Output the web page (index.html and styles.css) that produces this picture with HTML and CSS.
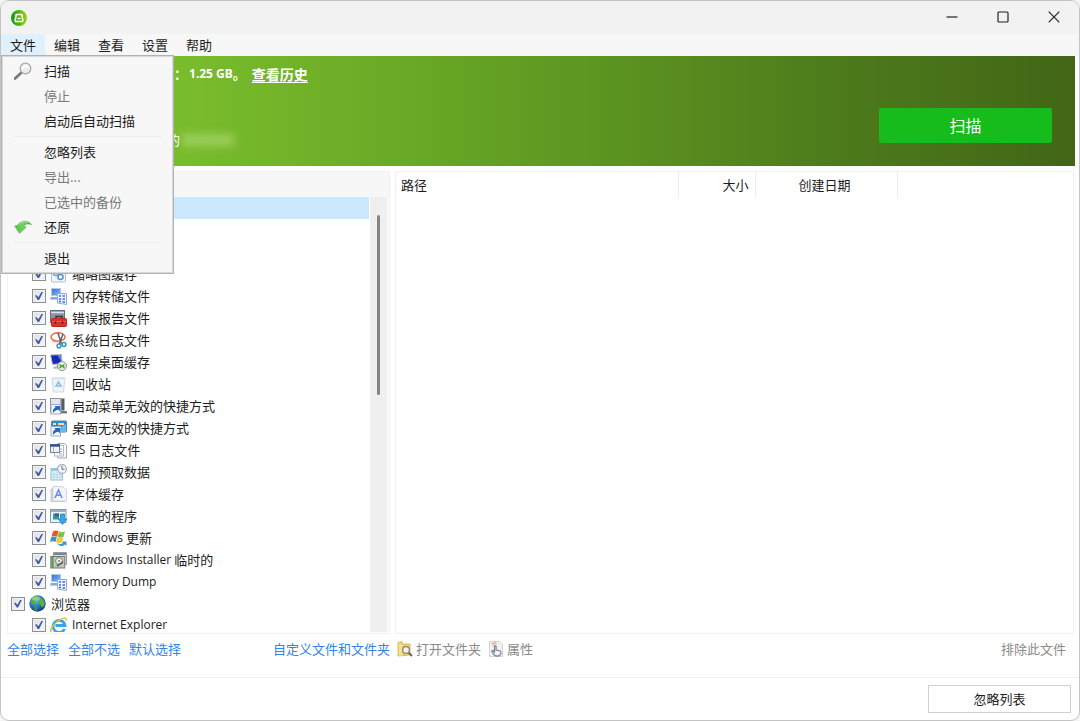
FILE: index.html
```html
<!DOCTYPE html>
<html lang="zh-CN">
<head>
<meta charset="utf-8">
<title>扫描</title>
<link rel="stylesheet" href="styles.css">
</head>
<body>
<svg class="defs" aria-hidden="true">
  <defs>
    <linearGradient id="g-leaf" x1="0" x2="1"><stop offset="0" stop-color="#0a9a18"/><stop offset="1" stop-color="#9ed400"/></linearGradient>
    <linearGradient id="g-arrow" x1="0" y1="0" x2="1" y2="0"><stop offset="0" stop-color="#4cbf43"/><stop offset=".5" stop-color="#6fd25c"/><stop offset="1" stop-color="#2c8f2c"/></linearGradient>
    <radialGradient id="g-globe" cx=".4" cy=".3" r=".8"><stop offset="0" stop-color="#6db8f5"/><stop offset=".6" stop-color="#1f62c4"/><stop offset="1" stop-color="#0b2d7c"/></radialGradient>
    <linearGradient id="g-blue" x1="0" y1="0" x2="1" y2="1"><stop offset="0" stop-color="#2f6fdc"/><stop offset="1" stop-color="#8ab8f6"/></linearGradient>
    <symbol id="i-dump" viewBox="0 0 17 17">
      <rect x="1.500" y=".5" width="9" height="7" fill="url(#g-blue)" stroke="#b4c8e6"/>
      <path d="M0 9h10v3H0z" fill="#b9cdea"/><path d="M1 10h6" stroke="#5a84c8"/>
      <path d="M7.500 5.500h9v11l-9-1.500z" fill="#eef4ff" stroke="#8ea9d8"/>
      <path d="M9 8h2M9 11h2M9 13.500h2M12.500 8h2.500M12.500 11h2.500M12.500 14h2.500" stroke="#3c68dc" stroke-width="1.300"/>
    </symbol>
  </defs>
</svg>

<div class="window">
  <header class="titlebar">
    <svg class="logo" viewBox="0 0 16 16" aria-hidden="true"><circle cx="8" cy="8" r="8" fill="url(#g-leaf)"/><path d="M4 11.500L5.200 4.500h5.600l1.200 7" fill="none" stroke="#fff" stroke-width="1.600"/><path d="M4 11.500h8M6.500 8.500h3" stroke="#fff" stroke-width="1.500"/></svg>
    <div class="controls">
      <button type="button" aria-label="最小化"><svg viewBox="0 0 12 12"><path d="M.5 6h11"/></svg></button>
      <button type="button" aria-label="最大化"><svg viewBox="0 0 12 12"><rect x="1" y="1" width="10" height="10" rx="1"/></svg></button>
      <button type="button" aria-label="关闭"><svg viewBox="0 0 12 12"><path d="M.7.7l10.600 10.600M11.300.7L.7 11.300"/></svg></button>
    </div>
  </header>

  <nav class="menubar">
    <button type="button" class="open">文件</button>
    <button type="button">编辑</button>
    <button type="button">查看</button>
    <button type="button">设置</button>
    <button type="button">帮助</button>
    <div class="dropdown">
      <button type="button"><svg viewBox="0 0 18 18" aria-hidden="true"><path d="M1 16.500l6-5.500" stroke="#777" stroke-width="2.600" stroke-linecap="round"/><circle cx="11.500" cy="6.500" r="5.300" fill="#eee" stroke="#a9a9a9" stroke-width="1.300"/><path d="M8 6.500c1-3 5-3.500 6.500-1" fill="none" stroke="#fff" stroke-width="2"/></svg>扫描</button>
      <button type="button" disabled>停止</button>
      <button type="button">启动后自动扫描</button>
      <hr>
      <button type="button">忽略列表</button>
      <button type="button" disabled>导出...</button>
      <button type="button" disabled>已选中的备份</button>
      <button type="button"><svg viewBox="0 0 18 18" aria-hidden="true"><path d="M.5 8L3.500 7.200C5.500 3.500 13.500.5 17.500 7c-3-1.800-6-1.300-7.500 1.300l2.300.9L5.500 15.500z" fill="url(#g-arrow)" stroke="#63b95a" stroke-width=".5"/><path d="M5 7.500c2-3 6-4 9-2.500" fill="none" stroke="#a5e595"/></svg>还原</button>
      <hr>
      <button type="button">退出</button>
    </div>
  </nav>

  <section class="hero">
    <div class="summary">
      <p class="freed"><span>：</span><span class="amount">1.25 GB</span><span>。</span><a href="#history">查看历史</a></p>
      <p class="notice">的<span class="smudge"></span></p>
    </div>
    <button type="button" class="scan">扫描</button>
  </section>

  <main class="panels">
    <section class="tree-panel">
      <div class="tree-head"></div>
      <div class="tree-body">
        <ul class="tree">
          <li class="group selected"></li>
          <li></li>
          <li></li>
          <li><label><input type="checkbox" checked><svg viewBox="0 0 17 17"><rect x="1.500" y=".5" width="14" height="15.500" rx="1" fill="#f1f4f8" stroke="#b9c0c9"/><circle cx="6" cy="7" r="2.500" fill="#fff" stroke="#6ea6d6" stroke-width="1.600"/><circle cx="10.500" cy="11" r="2.500" fill="#fff" stroke="#5794cc" stroke-width="1.600"/></svg>缩略图缓存</label></li>
          <li><label><input type="checkbox" checked><svg><use href="#i-dump"/></svg>内存转储文件</label></li>
          <li><label><input type="checkbox" checked><svg viewBox="0 0 17 17"><rect x=".5" y=".5" width="14" height="12" fill="#8b949e" stroke="#65707c"/><path d="M1 2.500h13" stroke="#dce2e8" stroke-width="1.500"/><path d="M6 9V6.500h6V9" fill="none" stroke="#343434" stroke-width="1.500"/><rect x="1.500" y="8.500" width="15" height="8" rx="1" fill="#d8322c" stroke="#b92a25"/><path d="M2 11.500h14" stroke="#f37a6b" stroke-width=".6"/><path d="M5.500 11.500v2M12.500 11.500v2" stroke="#4a1613" stroke-width="1.500"/></svg>错误报告文件</label></li>
          <li><label><input type="checkbox" checked><svg viewBox="0 0 17 17"><ellipse cx="8" cy="5" rx="7" ry="4.200" fill="none" stroke="#e56845" stroke-width="1.500"/><path d="M2 9c3 1.500 6 1.500 9-.5" fill="none" stroke="#f0977a"/><path d="M8 1l3.500 11M13 2l-4 11" stroke="#59636d" stroke-width="1.500"/><circle cx="9" cy="14" r="1.900" fill="#fff" stroke="#3299c4" stroke-width="1.500"/><circle cx="14" cy="12.500" r="1.900" fill="#fff" stroke="#3299c4" stroke-width="1.500"/></svg>系统日志文件</label></li>
          <li><label><input type="checkbox" checked><svg viewBox="0 0 17 17"><path d="M.5 1l11-.5.5 9-9.500 1z" fill="#1629b8" stroke="#b8bfcc"/><path d="M7 1l4-.2v6z" fill="#5c7dec"/><path d="M3 13l5-1.500v3L4 15z" fill="#b5bcc6"/><circle cx="12" cy="12" r="4.500" fill="#e8eee6" stroke="#8d958a"/><path d="M9.500 10.500l2 1.500-2 2M14.500 10.500l-2 1.500 2 2" fill="none" stroke="#34a32e" stroke-width="1.400"/></svg>远程桌面缓存</label></li>
          <li><label><input type="checkbox" checked><svg viewBox="0 0 17 17"><path d="M2 2l13-.5-1.500 14.500h-10z" fill="#eef4fa" stroke="#ced9e4"/><path d="M2 2.500h13" stroke="#dce6ef" stroke-width="2"/><path d="M8.500 6l2.500 4H6z" fill="none" stroke="#8fbcec" stroke-width="1.500"/></svg>回收站</label></li>
          <li><label><input type="checkbox" checked><svg viewBox="0 0 17 17"><rect x=".5" y=".5" width="10" height="14" fill="#dfe6ee" stroke="#8c939b"/><path d="M10 .5h4.500v12H10z" fill="#555b61"/><path d="M10 .5h1.500v12H10z" fill="#aab0b6"/><path d="M11 13h6v2.500h-6z" fill="#737980"/><rect x="1" y="6.500" width="9.500" height="9.500" fill="#f5f9ff" stroke="#97acc8"/><path d="M3 15c-.5-3 .5-5 2.500-5.500L4.500 8H10v5.500l-1.500-1.700C6 12 4.500 13 3 15z" fill="#2469b8"/></svg>启动菜单无效的快捷方式</label></li>
          <li><label><input type="checkbox" checked><svg viewBox="0 0 17 17"><rect x="1.500" y="1" width="15" height="11" rx="1" fill="#2b8ad4" stroke="#5a84a8"/><path d="M3 3h3v2H3zM8 3h6v2H8z" fill="#f3e493"/><path d="M9 8l7-4v8H9z" fill="#68b8ed"/><rect x="1" y="6.500" width="9.500" height="9.500" fill="#f5f9ff" stroke="#97acc8"/><path d="M3 15c-.5-3 .5-5 2.500-5.500L4.500 8H10v5.500l-1.500-1.700C6 12 4.500 13 3 15z" fill="#2469b8"/></svg>桌面无效的快捷方式</label></li>
          <li><label><input type="checkbox" checked><svg viewBox="0 0 17 17"><path d="M7.500 1.500h7l2 2v12.500h-9z" fill="#f6f7fa" stroke="#a4aab3"/><rect x="4.500" y="3.500" width="9" height="10.500" fill="#fbfbfd" stroke="#b5bbc6"/><path d="M9 7h3M9 9.500h3M9 12h3" stroke="#a89bc5"/><rect x=".5" y="2.500" width="9" height="8" fill="#eff3f8" stroke="#7186ab"/><path d="M0 3.500h10" stroke="#344f8d" stroke-width="2.400"/><path d="M3.500 5v5" stroke="#a2b4cf"/></svg><span class="latin">IIS</span>&nbsp;日志文件</label></li>
          <li><label><input type="checkbox" checked><svg viewBox="0 0 17 17"><rect x="1" y="4.500" width="11.500" height="11.500" fill="#dff1f8" stroke="#91c0d2"/><path d="M1 6h11" stroke="#91cfe4" stroke-width="2"/><path d="M4 8v7M7 8v7M10 8v7M2 10.500h10M2 13h10" stroke="#b1d9e7" stroke-width=".8"/><circle cx="12" cy="5" r="4.400" fill="#f2f5f7" stroke="#a4b1b9" stroke-width="1.200"/><path d="M12 2v3.300h2.500" fill="none" stroke="#56757f"/></svg>旧的预取数据</label></li>
          <li><label><input type="checkbox" checked><svg viewBox="0 0 17 17"><path d="M3 .5h9l4.500 3V15H3z" fill="#f4f5f8" stroke="#d3d6dd"/><path d="M.5 3.500L3 1v13l-2.500 2z" fill="#c9ced7"/><path d="M1 15.500h14" stroke="#c4cad4"/><path d="M5 12l3.500-8 3.500 8M6.500 9.300h4" fill="none" stroke="#6a90dc" stroke-width="1.600"/></svg>字体缓存</label></li>
          <li><label><input type="checkbox" checked><svg viewBox="0 0 17 17"><rect x=".5" y="1.500" width="15.500" height="13" fill="#eef3f7" stroke="#8297a9"/><path d="M1 3h15" stroke="#9eb0bf" stroke-width="2"/><path d="M3 5.500h6v6H3z" fill="#349b91"/><path d="M5 5.500h4v3H5z" fill="#2567a8"/><path d="M10.500 6h4v5h2.300l-4.300 5.500L8.200 11h2.300z" fill="#35a7e8" stroke="#197abd" stroke-width=".7"/></svg>下载的程序</label></li>
          <li><label><input type="checkbox" checked><svg viewBox="0 0 17 17"><path d="M3 1.500c2-1.500 3.500-1.300 5.500-.3L7 6.800c-2-1-3.700-1-5.500 0z" fill="#e9572c"/><path d="M9 1.500c2 1 4 1 6 0L13.500 7c-2 1-4 .8-6 0z" fill="#7cc242"/><path d="M1.300 7.300c2-1 3.700-1 5.500 0L5.500 12C3.500 11 2 11 0 12z" fill="#3c8fdd"/><path d="M7.200 7.500c2 1 4 1 6 0l-1.200 4.800c-2 1-4 .8-6 0z" fill="#f9c531"/><path d="M7 12.500c2 2 4 2 6 .5l-1-1.500h4.500V16L15 14.500c-3 2.500-6 2-8-2z" fill="#3a96d2"/></svg><span class="latin">Windows</span>&nbsp;更新</label></li>
          <li><label><input type="checkbox" checked><svg viewBox="0 0 17 17"><path d="M3.500.5h13v12h-13z" fill="#d9dcd8" stroke="#989e9a"/><path d="M4 2h12" stroke="#7183a6" stroke-width="2"/><rect x=".8" y="4.500" width="14" height="11.500" fill="#c0c5be" stroke="#747a74"/><path d="M2.500 5v11" stroke="#569944" stroke-width="2"/><circle cx="9" cy="9" r="3.400" fill="#f2f2ee" stroke="#7a7f7a"/><path d="M7 14l6-4" stroke="#5f665f" stroke-width="2"/><circle cx="9" cy="9" r="1" fill="#66706a"/></svg><span class="latin">Windows Installer</span>&nbsp;临时的</label></li>
          <li><label><input type="checkbox" checked><svg><use href="#i-dump"/></svg><span class="latin">Memory Dump</span></label></li>
          <li class="group"><label><input type="checkbox" checked><svg viewBox="0 0 17 17"><circle cx="8.500" cy="8.500" r="8.200" fill="url(#g-globe)"/><path d="M2 5c2-4 5-4.500 7-4l-.5 3-2 1.500L7 8 4.500 9.500 2 8zM11 2.500c3 1 5 4 4.500 8l-2.500 2-1.500-3-2-2z" fill="#56b52e"/><path d="M5 10.500l4 1-1.500 4.500c-2-.5-3-3-2.500-5.500z" fill="#3d9a2a"/><ellipse cx="7" cy="3.500" rx="4" ry="2" fill="#fff" opacity=".35"/></svg>浏览器</label></li>
          <li><label><input type="checkbox" checked><svg viewBox="0 0 17 17"><path d="M14.500 12a6 6 0 1 1 .5-3.500H5.500" fill="none" stroke="#38a5e4" stroke-width="2.800"/><path d="M2 15.500C-1.500 15 2 8 8 4c5-3.500 9-4 8-.5" fill="none" stroke="#f2bb28" stroke-width="1.500"/></svg><span class="latin">Internet Explorer</span></label></li>
        </ul>
        <div class="scrollbar"><div class="thumb"></div></div>
      </div>
    </section>

    <section class="file-panel">
      <table>
        <thead><tr><th class="path">路径</th><th class="size">大小</th><th class="date">创建日期</th><td></td></tr></thead>
      </table>
    </section>
  </main>

  <div class="actions">
    <div class="tree-links">
      <a href="#all">全部选择</a>
      <a href="#none">全部不选</a>
      <a href="#default">默认选择</a>
      <a href="#custom" class="custom">自定义文件和文件夹</a>
    </div>
    <div class="file-links">
      <button type="button" disabled><svg viewBox="0 0 16 16" aria-hidden="true"><path d="M1 1.500l4-1V3h8v11L1 15z" fill="#ead06d" stroke="#d9bf5c"/><path d="M2 2l3 2v11l-3-1z" fill="#f4e394"/><path d="M11.500 11.500l3.500 3.500" stroke="#6b6658" stroke-width="2"/><circle cx="9" cy="9" r="3.400" fill="#f3f2e8" stroke="#8c8877" stroke-width="1.300"/></svg>打开文件夹</button>
      <button type="button" disabled><svg viewBox="0 0 16 16" aria-hidden="true"><path d="M1.500.5h10l3 3V15.500h-13z" fill="#f1f1f1" stroke="#d2d2d2"/><path d="M6 0v5M3 2.500h6M4 5l4-4" stroke="#efb59a"/><path d="M6.500 11V5.500c0-1.200 1.600-1.200 1.600 0V9l4 1c1 .3 1 1 .8 2.200-.4 2-1.500 3-3.400 3-2.500 0-3.500-1-4.500-3L3.700 10c.8-1 1.800-.3 2.800 1z" fill="#f4f5f8" stroke="#7b808c" stroke-width="1.200"/></svg>属性</button>
      <button type="button" class="exclude" disabled>排除此文件</button>
    </div>
  </div>

  <footer class="bottom"><button type="button">忽略列表</button></footer>
</div>
</body>
</html>
```

FILE: styles.css
```css
* { box-sizing: border-box; }

body {
  margin: 0;
  background: #f4f4f4;
  color: #1c1c1c;
  font: 13px/20px "Noto Sans CJK SC", sans-serif;
}

button {
  padding: 0;
  border: 0;
  background: none;
  color: inherit;
  font: inherit;
}

p { margin: 0; }
.defs { position: absolute; width: 0; height: 0; }
.latin { font-family: "Open Sans", sans-serif; font-size: 12px; }

.window {
  display: flex;
  flex-direction: column;
  min-height: 100vh;
  border: 1px solid #c4c4c4;
  border-radius: 9px;
  background: #fff;
}

.titlebar {
  display: flex;
  align-items: center;
  justify-content: space-between;
  height: 33px;
  padding-left: 10px;
  border-radius: 8px 8px 0 0;
  background: #f2f2f2;
}
.logo { width: 16px; height: 16px; }
.controls { display: flex; align-self: flex-start; }
.controls button {
  display: grid;
  place-items: center;
  width: 51px;
  height: 32px;
}
.controls svg {
  width: 12px;
  height: 12px;
  fill: none;
  stroke: #222;
  stroke-width: 1.2;
}

.menubar {
  position: relative;
  z-index: 2;
  display: flex;
  height: 22px;
  background: #f7f7f7;
}
.menubar > button { width: 44px; line-height: 22px; }
.menubar > .open { background: #e1f0fd; }

.dropdown {
  position: absolute;
  top: 21px;
  left: 0;
  display: flex;
  flex-direction: column;
  width: 173px;
  padding: 2px 0 3px;
  border: 1px solid #b2b2b2;
  outline: 1px solid #d8d8d8;
  outline-offset: -2px;
  background: #f7f7f7;
}
.dropdown button {
  display: flex;
  align-items: center;
  height: 25px;
  padding-left: 42px;
}
.dropdown button:disabled { color: #777; }
.dropdown svg { width: 18px; height: 18px; margin: 0 12px 0 -30px; }
.dropdown hr {
  height: 6px;
  margin: 0 12px;
  border: 0;
  background: linear-gradient(#eee, #eee) center / 100% 1px no-repeat;
}

.hero {
  display: flex;
  justify-content: space-between;
  align-items: center;
  height: 110px;
  margin-right: 4px;
  padding: 0 23px 0 166px;
  background: linear-gradient(90deg, #85ce30, #7abd2c 16%, #6eae28 32%, #5e9721 54%, #4e7d1c 76%, #426616);
  color: #fff;
}
.summary { align-self: stretch; padding-top: 8px; }
.freed {
  display: flex;
  padding-left: 7px;
  font-weight: 700;
}
.freed .amount { margin-left: 2px; font: 700 12px/20px "Noto Sans", sans-serif; }
.freed a { margin-left: 6px; color: inherit; font-size: 14px; text-underline-offset: 2px; }
.notice { display: flex; align-items: center; margin-top: 46px; }
.smudge {
  width: 52px;
  height: 12px;
  margin-left: 2px;
  background: #b4dc7c;
  opacity: .6;
  filter: blur(4px);
}
.scan {
  width: 173px;
  height: 35px;
  margin-top: 28px;
  border-radius: 2px;
  background: #16bb1c;
  font-size: 16px;
  line-height: 32px;
}

.panels {
  flex: 1;
  display: grid;
  grid-template-columns: 383px 1fr;
  gap: 5px;
  padding: 5px 5px 0 6px;
}
.tree-panel, .file-panel { border: 1px solid #f1f1f1; }
.tree-head { height: 25px; background: #f7f7f7; }
.tree-body { display: flex; }
.tree {
  flex: 1;
  height: 435px;
  margin: 0;
  padding: 0;
  overflow: hidden;
  list-style: none;
}
.tree li { height: 22px; padding-left: 24px; }
.tree .group { height: 21px; padding-left: 3px; }
.tree .selected { height: 22px; margin-right: 1px; background: #cce8ff; }
.tree label { display: flex; align-items: center; height: 100%; }
.tree input {
  flex: none;
  appearance: none;
  width: 14px;
  height: 14px;
  margin: 0 4px 0 0;
  border: 1px solid #8e8f8f;
  background: linear-gradient(135deg, #dcdfe4, #f8f8f8);
  box-shadow: inset 0 0 0 1px #f2f2f2;
}
.tree input:checked::before {
  content: "";
  display: block;
  width: 8px;
  height: 8px;
  margin: 2px;
  background: #42599f;
  clip-path: polygon(0 45%, 20% 40%, 42% 66%, 80% 0, 100% 0, 52% 100%, 34% 100%);
}
.tree svg { flex: none; width: 17px; height: 17px; margin-right: 5px; }

.scrollbar { width: 19px; padding: 18px 8px 0 7px; border-right: 2px solid #fafafa; background: #efefef; }
.thumb { width: 3px; height: 180px; border-radius: 2px; background: #858585; }

.file-panel table { width: 100%; border-collapse: collapse; table-layout: fixed; }
.file-panel th, .file-panel td { height: 26px; padding: 0; font-weight: 400; }
.file-panel th { border-right: 1px solid #ededed; }
.file-panel .path { width: 282px; padding-left: 5px; text-align: left; }
.file-panel .size { width: 77px; padding-right: 6px; text-align: right; }
.file-panel .date { width: 142px; padding-right: 3px; }

.actions {
  display: grid;
  grid-template-columns: 383px 1fr;
  gap: 6px;
  height: 44px;
  padding: 5px 13px 0 6px;
  border-bottom: 1px solid #efefef;
}
.tree-links, .file-links { display: flex; height: 20px; }
.tree-links { gap: 9px; }
.tree-links a { color: #3584e4; text-decoration: none; }
.tree-links .custom { margin-left: auto; }
.file-links { gap: 6px; color: #8a8a8a; }
.file-links button { display: flex; align-items: center; }
.file-links svg { width: 16px; height: 16px; margin: 0 3px 0 1px; }
.file-links .exclude { margin-left: auto; }

.bottom { display: flex; justify-content: flex-end; padding: 7px 8px; }
.bottom button { width: 143px; height: 28px; border: 1px solid #cfcfcf; background: #fff; }
```
